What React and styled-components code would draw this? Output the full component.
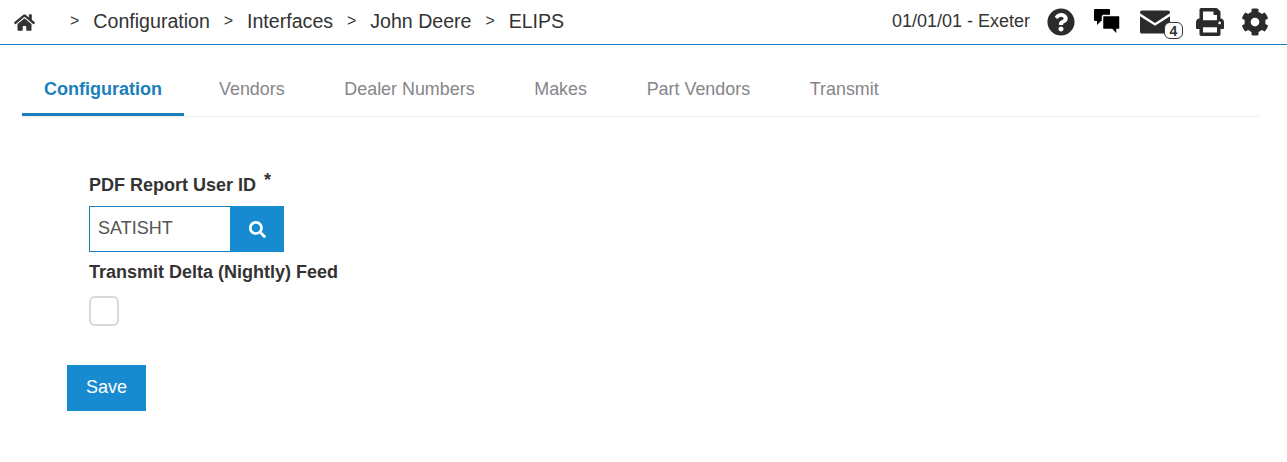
import React from 'react';
import styled, { createGlobalStyle } from 'styled-components';
import { FaHome, FaQuestionCircle, FaPrint, FaCog, FaSearch } from 'react-icons/fa';

const GlobalStyle = createGlobalStyle`
  html, body { margin: 0; padding: 0; background: #fff; }
  body { font-family: "Liberation Sans", Arial, sans-serif; color: #333; }
`;

const Header = styled.header`
  height: 44px;
  box-sizing: content-box;
  border-bottom: 1px solid #1a7fba;
  display: flex;
  align-items: center;
  justify-content: space-between;
  padding: 0 18px 0 14px;
`;

const Crumbs = styled.nav`
  display: flex;
  align-items: center;
  font-size: 19.6px;
  color: #333;
  padding-bottom: 2px;
`;

const HomeLink = styled.a`
  display: flex;
  color: #333;
  font-size: 21px;
  margin-right: 35px;
  padding-top: 2px;
`;

const Sep = styled.span`
  font-size: 16px;
  margin: 0 13.9px;
  &:first-of-type { margin-left: 0; margin-right: 14px; }
`;

const Tools = styled.div`
  display: flex;
  align-items: center;
`;

const Location = styled.span`
  font-size: 18px;
  margin-right: 17px;
  padding-bottom: 2px;
`;

const ToolIcon = styled.a`
  display: flex;
  color: #2b2b2b;
  font-size: 28px;
  margin-right: ${p => p.$gap || 0}px;
`;

const MailWrap = styled.a`
  position: relative;
  display: flex;
  margin-right: 26px;
`;

const Badge = styled.span`
  position: absolute;
  right: -13px;
  bottom: -5px;
  width: 19px;
  height: 17px;
  box-sizing: border-box;
  border: 1px solid #333;
  border-radius: 6px;
  background: #fff;
  font-size: 14px;
  font-weight: bold;
  line-height: 16px;
  text-align: center;
`;

const Tabs = styled.ul`
  list-style: none;
  display: flex;
  margin: 0 28px 0 22px;
  padding: 27px 0 0;
  border-bottom: 1px solid #eee;
`;

const Tab = styled.li`
  height: 41px;
  box-sizing: content-box;
  padding: 0 ${p => p.$active ? 22 : 29.85}px;
  font-size: ${p => p.$active ? 18 : 17.9}px;
  line-height: 34px;
  font-weight: ${p => p.$active ? 'bold' : 'normal'};
  color: ${p => p.$active ? '#1a7fba' : '#85858a'};
  border-bottom: 3px solid ${p => p.$active ? '#1a7fba' : 'transparent'};
  &:nth-child(2) { padding-left: 35px; }
`;

const Form = styled.form`
  padding: 57px 0 0 67px;
`;

const Field = styled.div`
  padding-left: 22px;
`;

const Label = styled.label`
  display: block;
  font-size: 18px;
  font-weight: bold;
  color: #333;
  line-height: 22px;
`;

const Required = styled.span`
  font-size: 18px;
  margin-left: 3px;
  line-height: 0;
  vertical-align: 5px;
`;

const Lookup = styled.div`
  display: flex;
  width: 195px;
  height: 46px;
  margin: 10px 0 9px;
`;

const LookupInput = styled.input`
  flex: 1;
  min-width: 0;
  box-sizing: border-box;
  border: 1px solid #1a7fba;
  border-right: 0;
  padding: 0 8px 2px;
  font: 18px "Liberation Sans", Arial, sans-serif;
  color: #555;
  outline: none;
`;

const LookupButton = styled.button`
  width: 54px;
  border: 0;
  padding: 0;
  background: #178ad0;
  color: #fff;
  font-size: 17px;
  display: flex;
  align-items: center;
  justify-content: center;
`;

const Check = styled.span`
  display: block;
  width: 30px;
  height: 30px;
  box-sizing: border-box;
  margin-top: 13px;
  border: 2px solid #d8d8d8;
  border-radius: 6px;
  background: #fff;
`;

const SaveButton = styled.button`
  display: block;
  margin-top: 39px;
  width: 79px;
  height: 46px;
  border: 0;
  padding: 0 0 2px;
  background: #178ad0;
  color: #fff;
  font: 18px "Liberation Sans", Arial, sans-serif;
`;

const crumbs = ['Configuration', 'Interfaces', 'John Deere', 'ELIPS'];
const tabs = ['Configuration', 'Vendors', 'Dealer Numbers', 'Makes', 'Part Vendors', 'Transmit'];

const ChatIcon = () => (
  <svg width="26" height="26" viewBox="0 0 26 26" fill="#000">
    <path d="M1 0h14a1 1 0 0 1 1 1v10a1 1 0 0 1-1 1H7l-4 4v-4H1a1 1 0 0 1-1-1V1a1 1 0 0 1 1-1z" />
    <path d="M9.500 6.500h15.500a1 1 0 0 1 1 1v12a1 1 0 0 1-1 1h-2V26l-5-5.500H9.500a1 1 0 0 1-1-1v-12a1 1 0 0 1 1-1z" stroke="#fff" strokeWidth="1.500" />
  </svg>
);

const MailIcon = () => (
  <svg width="30" height="24" viewBox="0 0 31 24" fill="#2b2b2b">
    <path d="M2 0h27a2 2 0 0 1 2 2v1L15.500 13 0 3V2a2 2 0 0 1 2-2z" />
    <path d="M0 6l15.500 10L31 6v16a2 2 0 0 1-2 2H2a2 2 0 0 1-2-2z" />
  </svg>
);

export default function App() {
  return (
    <>
      <GlobalStyle />
      <Header>
        <Crumbs>
          <HomeLink><FaHome /></HomeLink>
          {crumbs.map(c => (
            <React.Fragment key={c}>
              <Sep>&gt;</Sep>
              <span>{c}</span>
            </React.Fragment>
          ))}
        </Crumbs>
        <Tools>
          <Location>01/01/01 - Exeter</Location>
          <ToolIcon $gap={19}><FaQuestionCircle /></ToolIcon>
          <ToolIcon $gap={20}><ChatIcon /></ToolIcon>
          <MailWrap><MailIcon /><Badge>4</Badge></MailWrap>
          <ToolIcon $gap={17}><FaPrint /></ToolIcon>
          <ToolIcon><FaCog /></ToolIcon>
        </Tools>
      </Header>
      <Tabs>
        {tabs.map((t, i) => <Tab key={t} $active={i === 0}>{t}</Tab>)}
      </Tabs>
      <Form>
        <Field>
          <Label>PDF Report User ID <Required>*</Required></Label>
          <Lookup>
            <LookupInput defaultValue="SATISHT" />
            <LookupButton type="button"><FaSearch /></LookupButton>
          </Lookup>
          <Label>Transmit Delta (Nightly) Feed</Label>
          <Check />
        </Field>
        <SaveButton type="button">Save</SaveButton>
      </Form>
    </>
  );
}
